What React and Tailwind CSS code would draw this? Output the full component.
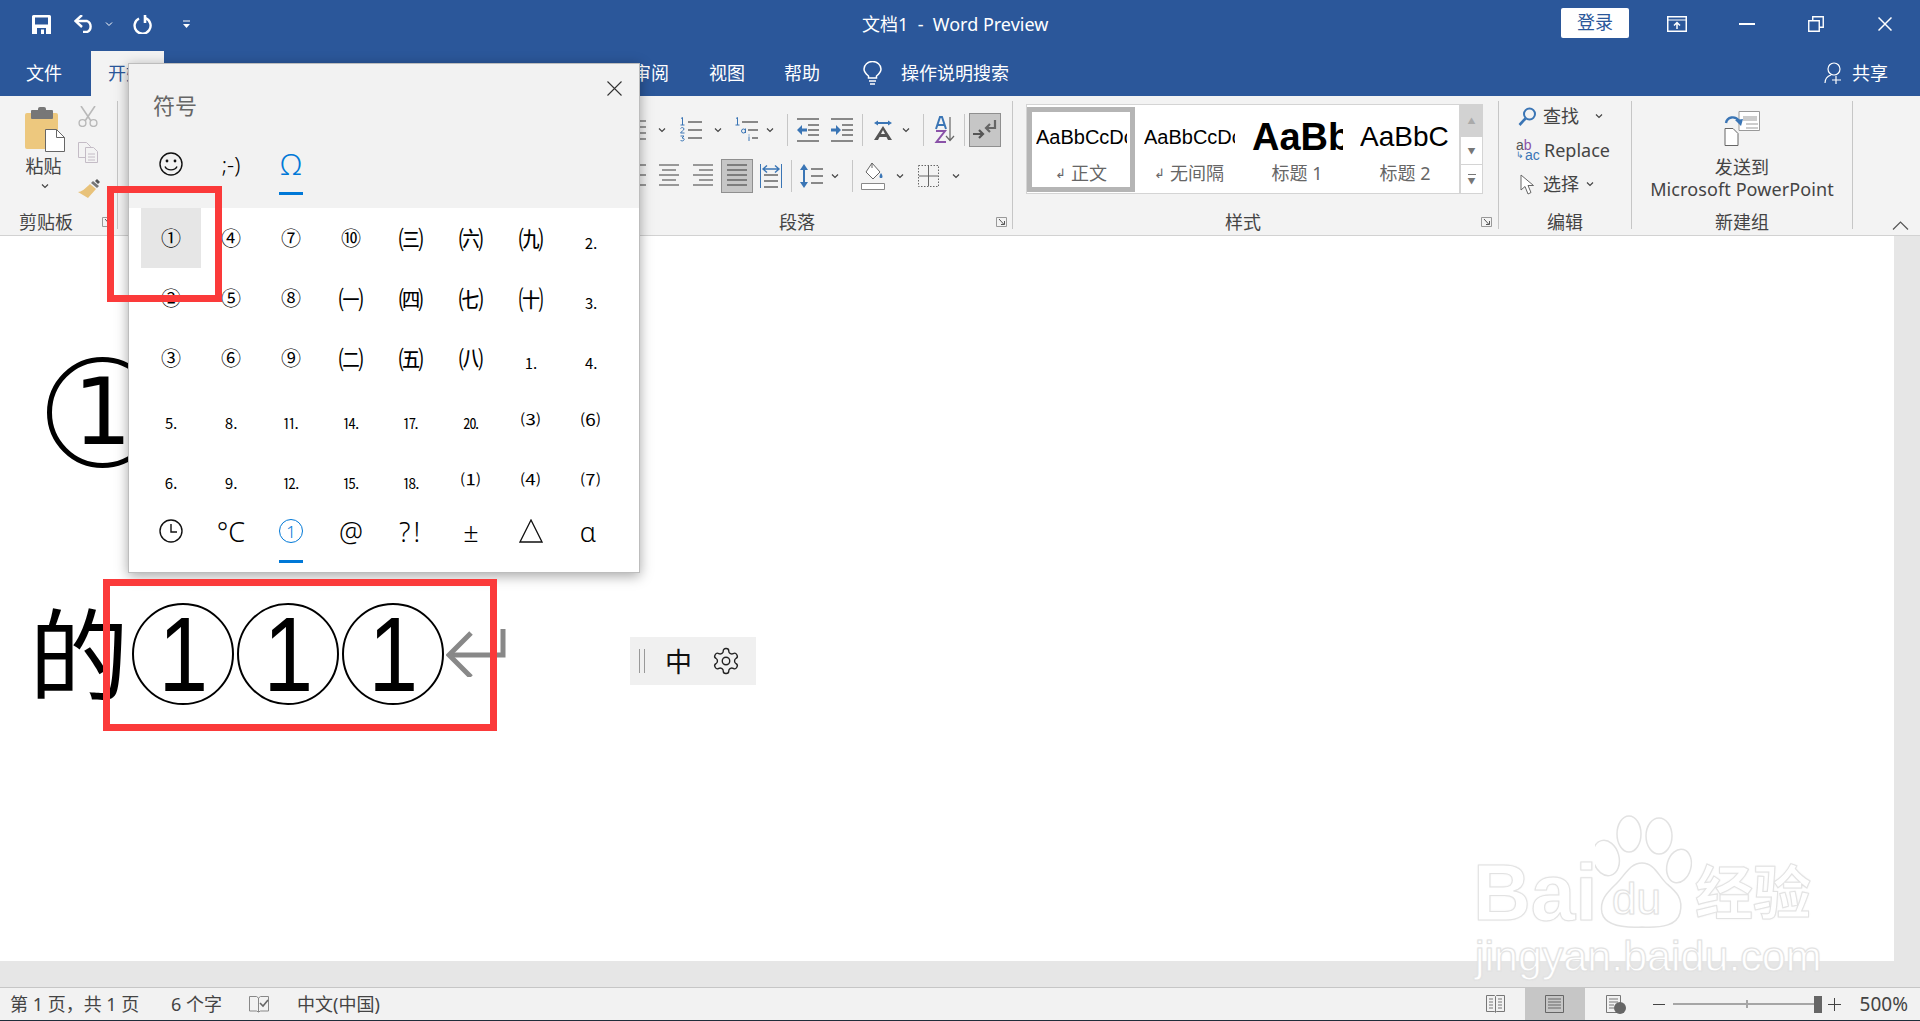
import React from "react";

const blue = "#2b579a";

function Chev({ className = "" }) {
  return (
    <svg width="8" height="6" viewBox="0 0 8 6" className={`shrink-0 ${className}`}>
      <path d="M1 1.5l3 3 3-3" fill="none" stroke="#444" strokeWidth="1.2" />
    </svg>
  );
}

function Sep({ className = "" }) {
  return <div className={`w-px h-[32px] bg-[#c6c6c6] shrink-0 ${className}`} />;
}

function GroupSep() {
  return <div className="w-px h-[128px] mt-[5px] bg-[#c6c6c6] shrink-0" />;
}

function Launcher({ className = "" }) {
  return (
    <svg width="11" height="10" viewBox="0 0 11 10" className={`shrink-0 ${className}`}>
      <path d="M.5 9.5V.5h10v9z" fill="none" stroke="#999" />
      <path d="M3 2l5 5.5M8.5 4v3.5H5" fill="none" stroke="#555" />
    </svg>
  );
}

function Lines({ w = 22, rows = [], color = "#666" }) {
  return (
    <svg width={w} height="26" viewBox={`0 0 ${w} 26`} className="shrink-0">
      {rows.map(([x1, x2, y], i) => (
        <path key={i} d={`M${x1} ${y}H${x2}`} stroke={color} strokeWidth="1.3" />
      ))}
    </svg>
  );
}

const even = [0, 6, 12, 18, 24];

function ListIcon() {
  return <Lines rows={even.slice(0, 4).map((y) => [8, 22, y + 4])} />;
}

function NumberedIcon() {
  return (
    <svg width="22" height="26" viewBox="0 0 22 26" className="shrink-0 overflow-visible">
      <path d="M1 1.500l1.500-1V8M0.500 8h4" fill="none" stroke="#3a75b5" />
      <path d="M.5 11.500c1-1.500 3.500-1 3.500.5s-3.500 3-3.500 4h4" fill="none" stroke="#3a75b5" />
      <path d="M.5 19h3.500l-2 2c2 0 2.500 1 2 2s-3 1.500-3.500 0" fill="none" stroke="#3a75b5" />
      <path d="M8 5h14M8 13h14M8 21h14" stroke="#666" strokeWidth="1.3" />
    </svg>
  );
}

function MultiIcon() {
  return (
    <svg width="23" height="26" viewBox="0 0 23 26" className="shrink-0 overflow-visible">
      <path d="M1 1.500l1.500-1V8M0.500 8h4" fill="none" stroke="#3a75b5" />
      <circle cx="8.500" cy="14" r="2" fill="none" stroke="#3a75b5" />
      <path d="M10.500 11.500V16" stroke="#3a75b5" />
      <path d="M14 19.500V24M14 17.500v1" stroke="#3a75b5" />
      <path d="M7 5h16M13 13h10M17 21h6" stroke="#666" strokeWidth="1.3" />
    </svg>
  );
}

function IndentIcon({ flip }) {
  return (
    <svg width="22" height="24" viewBox="0 0 22 24" className="shrink-0">
      <path d="M0 1h22M11 7h11M11 12h11M11 17h11M0 23h22" stroke="#666" strokeWidth="1.3" />
      {flip ? (
        <path d="M0 10.5h5V7l5 5-5 5v-3.5H0z" fill="#3a75b5" />
      ) : (
        <path d="M10 10.5H5V7l-5 5 5 5v-3.5h5z" fill="#3a75b5" />
      )}
    </svg>
  );
}

function AsianIcon() {
  return (
    <svg width="24" height="20" viewBox="0 0 24 20" className="shrink-0">
      <path d="M3 3l4-2.5V2h10V.5L21 3l-4 2.5V4H7v1.5z" fill="#3a75b5" />
      <path d="M3 20L12 6l9 14h-4l-1.5-3h-7L7 20zM10 14h4l-2-4z" fill="#555" />
    </svg>
  );
}

function SortIcon() {
  return (
    <svg width="20" height="28" viewBox="0 0 20 28" className="shrink-0 overflow-visible">
      <path d="M1 13L5 1h2l4 12M2.500 9h7" fill="none" stroke="#3a75b5" strokeWidth="2" />
      <path d="M1 15h9L1.500 26H11" fill="none" stroke="#8a52a8" strokeWidth="2" />
      <path d="M15 1v23M11 20l4 4.5 4-4.5" fill="none" stroke="#666" strokeWidth="1.2" />
    </svg>
  );
}

function PilcrowIcon() {
  return (
    <svg width="24" height="24" viewBox="0 0 24 24">
      <path d="M22 2v8H13M17 6l-4 4 4 4" fill="none" stroke="#666" strokeWidth="2.2" />
      <path d="M0 16h10M6 12l4 4-4 4" fill="none" stroke="#555" strokeWidth="2.2" />
    </svg>
  );
}

function DistributeIcon() {
  return (
    <svg width="22" height="24" viewBox="0 0 22 24" className="shrink-0">
      <path d="M4 11h14M4 17h14M4 23h14" stroke="#666" strokeWidth="1.3" />
      <path d="M.5 0v24M21.5 0v24" stroke="#3a75b5" />
      <path d="M3 5h16M7 1.5L3 5l4 3.5M15 1.5L19 5l-4 3.5" fill="none" stroke="#3a75b5" strokeWidth="1.4" />
    </svg>
  );
}

function SpacingIcon() {
  return (
    <svg width="23" height="26" viewBox="0 0 23 26" className="shrink-0">
      <path d="M4 3v20" stroke="#3a75b5" strokeWidth="2" />
      <path d="M0 7l4-6 4 6zM0 19l4 6 4-6z" fill="#3a75b5" />
      <path d="M11 6h12M11 13h12M11 20h12" stroke="#666" strokeWidth="1.3" />
    </svg>
  );
}

function ShadingIcon() {
  return (
    <svg width="24" height="28" viewBox="0 0 24 28" className="shrink-0">
      <path d="M11 1l8 9-7 7-7-7z" fill="#fff" stroke="#666" />
      <path d="M20 11c2 3 2 5 0 5s-2-2 0-5z" fill="#3a75b5" />
      <path d="M11 1v5" stroke="#666" />
      <path d="M.5 21.5h23v6H.5z" fill="#fff" stroke="#888" />
    </svg>
  );
}

function BordersIcon() {
  return (
    <svg width="21" height="22" viewBox="0 0 21 22" className="shrink-0">
      <path d="M.5.5h20v21H.5z" fill="none" stroke="#666" strokeDasharray="1.5 1.5" />
      <path d="M10.5 1v20M1 11h19" stroke="#666" />
    </svg>
  );
}

function ClipboardIcon() {
  return (
    <svg width="40" height="45" viewBox="0 0 40 45" className="shrink-0">
      <rect x="0" y="6" width="33" height="36" rx="2" fill="#edc87e" />
      <rect x="6" y="3" width="22" height="9" rx="1" fill="#777" />
      <rect x="13" y="0" width="8" height="6" rx="2" fill="#777" />
      <path d="M20.5 22.5h11l8 8v14h-19z" fill="#fff" stroke="#666" />
      <path d="M31.5 22.5v8h8" fill="none" stroke="#666" />
    </svg>
  );
}

function CutIcon() {
  return (
    <svg width="20" height="21" viewBox="0 0 20 21" className="shrink-0">
      <path d="M3 0l10 15M17 0L7 15" stroke="#b9b9b9" strokeWidth="1.6" />
      <circle cx="4.5" cy="17" r="3.4" fill="none" stroke="#b9b9b9" strokeWidth="1.4" />
      <circle cx="15.5" cy="17" r="3.4" fill="none" stroke="#b9b9b9" strokeWidth="1.4" />
    </svg>
  );
}

function CopyIcon() {
  return (
    <svg width="20" height="21" viewBox="0 0 20 21" className="shrink-0">
      <path d="M.5.5h8l4 4v11H.5z" fill="#f3f3f3" stroke="#c4bcc6" />
      <path d="M7.5 5.5h8l4 4v11h-12z" fill="#f3f3f3" stroke="#c4bcc6" />
      <path d="M10 12h7M10 15h7M10 18h7" stroke="#c4bcc6" />
    </svg>
  );
}

function PainterIcon() {
  return (
    <svg width="23" height="20" viewBox="0 0 23 20" className="shrink-0">
      <path d="M15 3l6 5-2 2-6-5z" fill="#777" />
      <path d="M19 1l3 3-2 2-3-3z" fill="#555" />
      <path d="M12 6l6 5-8 9-10-6c3 0 7-3 12-8z" fill="#e8c27a" />
    </svg>
  );
}

function Replace() {
  return (
    <div className="w-[22px] h-[20px] relative shrink-0 text-[14px] leading-[10px] font-['Liberation_Sans',sans-serif]">
      <span className="text-[#555]">a</span>
      <span className="text-[#8a52a8]">b</span>
      <div className="flex items-center">
        <span className="text-[#3a75b5] text-[9px] mr-[1px]">↳</span>
        <span className="text-[#3a75b5]">ac</span>
      </div>
    </div>
  );
}

function StyleItem({ active, sample, label, arrow, sampleClass }) {
  return (
    <div className={`w-[108px] h-[85px] border-[5px] flex flex-col shrink-0 ${active ? "border-[#b5b5b5]" : "border-transparent"}`}>
      <div className="h-[50px] pl-[4px] flex items-center">
        <div className={`w-[91px] overflow-hidden whitespace-nowrap text-black font-['Liberation_Sans',sans-serif] ${sampleClass}`}>
          {sample}
        </div>
      </div>
      <div className="h-[22px] flex items-center justify-center text-[#666] text-[18px] whitespace-nowrap">
        {arrow && <span className="text-[13px] mr-[5px]">↲</span>}
        {label}
      </div>
    </div>
  );
}

function Ribbon() {
  return (
    <div className="flex h-[140px] shrink-0 bg-[#f3f3f3] border-b border-[#d2d2d2] text-[#444] text-[18px] leading-none">
      <div className="w-[117px] flex flex-col shrink-0">
        <div className="flex-1 flex pl-[24px]">
          <div className="w-[42px] flex flex-col items-center pt-[11px]">
            <ClipboardIcon />
            <div className="mt-[5px] -ml-[3px] whitespace-nowrap">粘贴</div>
            <Chev className="mt-[8px]" />
          </div>
          <div className="ml-[12px] flex flex-col pt-[10px] gap-[15px]">
            <CutIcon />
            <CopyIcon />
            <PainterIcon />
          </div>
        </div>
        <div className="h-[26px] flex items-center pl-[19px]">
          剪贴板
          <Launcher className="ml-[29px]" />
        </div>
      </div>
      <GroupSep />

      <div className="w-[894px] flex flex-col shrink-0">
        <div className="flex-1 pt-[17px] pl-[506px]">
          <div className="flex items-center h-[34px]">
            <ListIcon />
            <Chev className="ml-[12px]" />
            <div className="ml-[14px]"><NumberedIcon /></div>
            <Chev className="ml-[12px]" />
            <div className="ml-[13px]"><MultiIcon /></div>
            <Chev className="ml-[8px]" />
            <Sep className="ml-[13px]" />
            <div className="ml-[9px]"><IndentIcon /></div>
            <div className="ml-[12px]"><IndentIcon flip /></div>
            <Sep className="ml-[9px]" />
            <div className="ml-[8px]"><AsianIcon /></div>
            <Chev className="ml-[7px]" />
            <Sep className="ml-[13px]" />
            <div className="ml-[11px]"><SortIcon /></div>
            <Sep className="ml-[9px]" />
            <div className="ml-[4px] w-[32px] h-[34px] bg-[#c6c6c6] border border-[#8f8f8f] flex items-center justify-center">
              <PilcrowIcon />
            </div>
          </div>
          <div className="flex items-center h-[34px] mt-[12px]">
            <Lines rows={[[8, 22, 2], [8, 16, 7], [8, 22, 12], [8, 16, 17], [8, 22, 22]]} />
            <div className="ml-[13px]"><Lines w={20} rows={[[0, 20, 2], [3, 17, 7], [0, 20, 12], [3, 17, 17], [0, 20, 22]]} /></div>
            <div className="ml-[14px]"><Lines w={20} rows={[[0, 20, 2], [6, 20, 7], [0, 20, 12], [6, 20, 17], [0, 20, 22]]} /></div>
            <div className="ml-[8px] w-[32px] h-[34px] bg-[#c6c6c6] border border-[#8f8f8f] flex items-center justify-center">
              <Lines w={20} color="#555" rows={[[0, 20, 2], [0, 20, 7], [0, 20, 12], [0, 20, 17], [0, 20, 22]]} />
            </div>
            <div className="ml-[7px]"><DistributeIcon /></div>
            <Sep className="ml-[9px]" />
            <div className="ml-[8px]"><SpacingIcon /></div>
            <Chev className="ml-[8px]" />
            <Sep className="ml-[13px]" />
            <div className="ml-[8px]"><ShadingIcon /></div>
            <Chev className="ml-[11px]" />
            <div className="ml-[14px]"><BordersIcon /></div>
            <Chev className="ml-[13px]" />
          </div>
        </div>
        <div className="h-[26px] flex items-center pl-[661px]">
          段落
          <Launcher className="ml-[181px]" />
        </div>
      </div>
      <GroupSep />

      <div className="w-[485px] flex flex-col shrink-0">
        <div className="flex-1 pl-[13px] pt-[8px]">
          <div className="flex">
            <div className="w-[434px] h-[90px] bg-white border border-[#d4d4d4] flex pt-[2px] overflow-hidden">
              <StyleItem active sample="AaBbCcDc" label="正文" arrow sampleClass="text-[20px]" />
              <StyleItem sample="AaBbCcDc" label="无间隔" arrow sampleClass="text-[20px]" />
              <StyleItem sample="AaBb" label="标题 1" sampleClass="text-[38px] font-bold" />
              <StyleItem sample="AaBbC" label="标题 2" sampleClass="text-[28px]" />
            </div>
            <div className="w-[23px] h-[90px] flex flex-col">
              <div className="h-[33px] bg-[#d2d2d2] border border-[#d2d2d2] flex items-center justify-center text-[#aaa] text-[8px]">▲</div>
              <div className="h-[28px] bg-white border border-t-0 border-[#d4d4d4] flex items-center justify-center text-[#777] text-[8px]">▼</div>
              <div className="h-[29px] bg-white border border-t-0 border-[#d4d4d4] flex flex-col items-center justify-center text-[#777]">
                <div className="w-[8px] h-px bg-[#777] mb-[2px]" />
                <div className="text-[8px]">▼</div>
              </div>
            </div>
          </div>
        </div>
        <div className="h-[26px] flex items-center pl-[212px]">
          样式
          <Launcher className="ml-[220px]" />
        </div>
      </div>
      <GroupSep />

      <div className="w-[132px] flex flex-col shrink-0">
        <div className="flex-1 pt-[3px] pl-[17px]">
          <div className="flex items-center h-[34px]">
            <div className="w-[22px] flex justify-center">
              <svg width="19" height="19" viewBox="0 0 19 19">
                <circle cx="11.5" cy="7" r="5.5" fill="none" stroke="#3a75b5" strokeWidth="2" />
                <path d="M7.5 11.5L1.5 18" stroke="#3a75b5" strokeWidth="2.6" />
              </svg>
            </div>
            <span className="ml-[5px]">查找</span>
            <Chev className="ml-[16px]" />
          </div>
          <div className="flex items-center h-[34px]">
            <Replace />
            <span className="ml-[6px]">Replace</span>
          </div>
          <div className="flex items-center h-[34px]">
            <div className="w-[22px] flex justify-center">
              <svg width="15" height="21" viewBox="0 0 15 21">
                <path d="M1 1v15l4-3.5 3 7.5 3-1.5-3-7h5.5z" fill="#fff" stroke="#666" />
              </svg>
            </div>
            <span className="ml-[5px]">选择</span>
            <Chev className="ml-[7px]" />
          </div>
        </div>
        <div className="h-[26px] flex items-center pl-[48px]">编辑</div>
      </div>
      <GroupSep />

      <div className="w-[220px] flex flex-col shrink-0">
        <div className="flex-1 flex flex-col items-center pt-[14px]">
          <svg width="36" height="36" viewBox="0 0 36 36">
            <path d="M15 1.5h20.5v19H15z" fill="#fff" stroke="#999" />
            <path d="M19 6h14v5H19z" fill="#ccc" />
            <path d="M22 14h12M22 18h12" stroke="#999" />
            <path d="M1 18.5h8l5 5v12H1z" fill="#fff" stroke="#666" />
            <path d="M2 13c1-6 9-8 13-2" fill="none" stroke="#3a75b5" strokeWidth="2.4" />
            <path d="M11 10l6 6 2-7z" fill="#3a75b5" />
          </svg>
          <div className="mt-[10px] leading-[22px] text-center whitespace-nowrap tracking-[0.1px]">
            发送到
            <br />
            Microsoft PowerPoint
          </div>
        </div>
        <div className="h-[26px] flex items-center justify-center">新建组</div>
      </div>
      <GroupSep />

      <svg width="17" height="9" viewBox="0 0 17 9" className="self-end mb-[5px] ml-[39px] shrink-0">
        <path d="M1 8.5l7.5-7.5 7.5 7.5" fill="none" stroke="#555" strokeWidth="1.2" />
      </svg>
    </div>
  );
}

function TitleBar() {
  return (
    <div className="h-[51px] shrink-0 flex items-center pr-[28px] text-white">
      <svg width="19" height="19" viewBox="0 0 19 19" className="ml-[32px] shrink-0 -mt-[3px]">
        <path d="M0 1.5A1.5 1.5 0 011.5 0h16A1.5 1.5 0 0119 1.5V19H0z" fill="#fff" />
        <path d="M3 2.5h13v7H3z" fill={blue} />
        <path d="M5 13h9v6H5z" fill={blue} />
        <path d="M9 14.5h3V19H9z" fill="#fff" />
      </svg>
      <svg width="21" height="18" viewBox="0 0 21 18" className="ml-[23px] shrink-0 -mt-[3px]">
        <path d="M2 6h11a6 6 0 010 11H9" fill="none" stroke="#fff" strokeWidth="2.4" />
        <path d="M8 0L1.5 6 8 12" fill="none" stroke="#fff" strokeWidth="2.4" />
      </svg>
      <svg width="8" height="6" viewBox="0 0 8 6" className="ml-[10px] shrink-0 -mt-[3px]">
        <path d="M1 1.5l3 3 3-3" fill="none" stroke="#fff" />
      </svg>
      <svg width="19" height="19" viewBox="0 0 19 19" className="ml-[20px] shrink-0 -mt-[3px]">
        <path d="M6 3.5a8 8 0 106.5-.3" fill="none" stroke="#fff" strokeWidth="2.4" />
        <path d="M12 0v8" stroke="#fff" strokeWidth="2.6" />
      </svg>
      <svg width="9" height="9" viewBox="0 0 9 9" className="ml-[30px] shrink-0 -mt-[3px]">
        <path d="M1 1h7" stroke="#fff" />
        <path d="M1 4h7L4.5 8z" fill="#fff" />
      </svg>
      <div className="ml-[671px] -mt-[3px] text-[18px] whitespace-nowrap">文档1&nbsp; - &nbsp;Word Preview</div>
      <div className="ml-auto -mt-[6px] w-[68px] h-[30px] bg-white rounded-[2px] flex items-center justify-center text-[18px] text-[#2b579a]">登录</div>
      <svg width="20" height="16" viewBox="0 0 20 16" className="ml-[38px] shrink-0 -mt-[3px]">
        <path d="M.75.75h18.500v14.500H.75z" fill="none" stroke="#fff" strokeWidth="1.5" />
        <path d="M1 4h18" stroke="#fff" />
        <path d="M10 13V7M7 9.5l3-3 3 3" fill="none" stroke="#fff" strokeWidth="1.5" />
      </svg>
      <div className="ml-[52px] w-[16px] h-[2px] bg-white shrink-0 -mt-[3px]" />
      <svg width="16" height="16" viewBox="0 0 16 16" className="ml-[53px] shrink-0 -mt-[3px]">
        <path d="M.75 4.75h10.500v10.500H.75zM4.75 4.5V.75h10.500v10.500H11.5" fill="none" stroke="#fff" strokeWidth="1.4" />
      </svg>
      <svg width="14" height="14" viewBox="0 0 14 14" className="ml-[54px] shrink-0 -mt-[3px]">
        <path d="M.5.5l13 13M13.5.5l-13 13" stroke="#fff" strokeWidth="1.5" />
      </svg>
    </div>
  );
}

function TabRow() {
  return (
    <div className="h-[45px] shrink-0 flex items-center pr-[32px] text-white text-[18px] leading-none">
      <div className="ml-[26px] w-[36px] -mt-[2px]">文件</div>
      <div className="ml-[29px] w-[73px] self-stretch bg-[#f3f3f3] text-[#2b579a] pl-[17px] pb-[2px] flex items-center">开始</div>
      <div className="ml-[469px] -mt-[2px]">审阅</div>
      <div className="ml-[40px] -mt-[2px]">视图</div>
      <div className="ml-[39px] -mt-[2px]">帮助</div>
      <svg width="19" height="24" viewBox="0 0 19 24" className="ml-[43px] shrink-0 -mt-[2px]">
        <path d="M5.5 15C3 13 1 11 1 8a8.500 7.500 0 0117 0c0 3-2 5-4.500 7v2h-8z" fill="none" stroke="#fff" strokeWidth="1.5" />
        <path d="M6 20h7M7 23h5" stroke="#fff" strokeWidth="1.5" />
      </svg>
      <div className="ml-[19px] -mt-[2px]">操作说明搜索</div>
      <svg width="20" height="22" viewBox="0 0 20 22" className="ml-auto shrink-0 -mt-[2px]">
        <circle cx="10" cy="7" r="6" fill="none" stroke="#fff" strokeWidth="1.2" />
        <path d="M1 21c0-5 3-7 6-8M12 14v8M8 18h9" fill="none" stroke="#fff" strokeWidth="1.2" />
      </svg>
      <div className="ml-[8px] -mt-[2px]">共享</div>
    </div>
  );
}

const grid = [
  "①", "②", "③", "⒌", "⒍",
  "④", "⑤", "⑥", "⒏", "⒐",
  "⑦", "⑧", "⑨", "⒒", "⒓",
  "⑩", "㈠", "㈡", "⒕", "⒖",
  "㈢", "㈣", "㈤", "⒘", "⒙",
  "㈥", "㈦", "㈧", "⒛", "⑴",
  "㈨", "㈩", "⒈", "⑶", "⑷",
  "⒉", "⒊", "⒋", "⑹", "⑺",
];

// the symbol kinds are drawn at different sizes in the picker
function glyphClass(c) {
  if (c >= "\u2488" && c <= "\u249b") return "text-[15px] pt-[8px]";
  if (c >= "\u2474" && c <= "\u2487") return "text-[15px] scale-x-[1.3]";
  if (c >= "\u3220" && c <= "\u3229") return "text-[25px]";
  return "text-[20px]";
}

function SymbolPopup() {
  return (
    <div className="absolute left-[128px] top-[63px] w-[512px] h-[510px] bg-white border border-[#bdbdbd] shadow-[0_3px_12px_rgba(0,0,0,0.35)] flex flex-col">
      <div className="h-[144px] bg-[#f2f2f2] relative shrink-0">
        <div className="pt-[30px] pl-[24px] text-[22px] leading-none text-[#666]">符号</div>
        <svg width="15" height="15" viewBox="0 0 15 15" className="absolute right-[17px] top-[17px]">
          <path d="M.5.500l14 14M14.500.500l-14 14" stroke="#333" strokeWidth="1.1" />
        </svg>
        <div className="flex pl-[12px] mt-[28px] text-black">
          <div className="w-[60px] h-[40px] flex items-center justify-center">
            <svg width="24" height="24" viewBox="0 0 24 24">
              <circle cx="12" cy="12" r="11" fill="none" stroke="#111" strokeWidth="1.4" />
              <circle cx="8" cy="9" r="1.400" fill="#111" />
              <circle cx="16" cy="9" r="1.400" fill="#111" />
              <path d="M6 14.500c2 4.500 10 4.500 12 0" fill="none" stroke="#111" strokeWidth="1.4" />
            </svg>
          </div>
          <div className="w-[60px] h-[40px] flex items-center justify-center text-[22px] font-light">;-)</div>
          <div className="w-[60px] h-[40px] flex flex-col items-center justify-center text-[#0078d7] text-[30px] leading-none font-light">Ω</div>
        </div>
        <div className="absolute left-[150px] top-[128px] w-[24px] h-[3px] bg-[#0078d7]" />
      </div>
      <div className="pl-[12px] grid grid-flow-col grid-rows-[repeat(5,60px)] grid-cols-[repeat(8,60px)] text-black leading-none font-['Noto_Sans_CJK_SC',sans-serif] shrink-0 h-[300px]">
        {grid.map((c, i) => (
          <div key={i} className={`flex items-center justify-center ${i === 0 ? "bg-[#e6e6e6]" : ""}`}>
            <span className={glyphClass(c)}>{c}</span>
          </div>
        ))}
      </div>
      <div className="pl-[12px] flex text-black leading-none relative font-light">
        <div className="w-[60px] h-[46px] flex items-center justify-center">
          <svg width="24" height="24" viewBox="0 0 24 24">
            <circle cx="12" cy="12" r="11" fill="none" stroke="#111" strokeWidth="1.4" />
            <path d="M12 5v8h6" fill="none" stroke="#111" strokeWidth="1.4" />
          </svg>
        </div>
        <div className="w-[60px] h-[46px] flex items-center justify-center text-[27px]">°C</div>
        <div className="w-[60px] h-[46px] flex items-center justify-center">
          <div className="w-[24px] h-[24px] rounded-full border border-[#0078d7] text-[#0078d7] text-[17px] flex items-center justify-center">1</div>
        </div>
        <div className="w-[60px] h-[46px] flex items-center justify-center text-[27px]">@</div>
        <div className="w-[60px] h-[46px] flex items-center justify-center text-[27px] tracking-[3px]">?!</div>
        <div className="w-[60px] h-[46px] flex items-center justify-center text-[27px]">±</div>
        <div className="w-[60px] h-[46px] flex items-center justify-center">
          <svg width="24" height="24" viewBox="0 0 24 24">
            <path d="M12 1L1 23h22z" fill="none" stroke="#111" strokeWidth="1.3" />
          </svg>
        </div>
        <div className="w-[54px] h-[46px] flex items-center justify-center text-[27px]">α</div>
        <div className="absolute left-[150px] top-[52px] w-[24px] h-[3px] bg-[#0078d7]" />
      </div>
    </div>
  );
}

function Circled() {
  return (
    <div className="w-[102px] h-[102px] shrink-0 rounded-full border-2 border-black flex items-center justify-center text-[105px] leading-none text-black font-['Liberation_Sans',sans-serif]">
      <span className="scale-x-[0.85]">1</span>
    </div>
  );
}

function Document() {
  return (
    <div className="flex-1 flex min-h-0">
      <div className="flex-1 bg-white pt-[121px] overflow-hidden">
        <div className="ml-[47px] w-[111px] h-[111px] rounded-full border-[5px] border-black flex items-center justify-center text-[92px] leading-none text-black font-['DejaVu_Sans',sans-serif]">
          1
        </div>
        <div className="mt-[135px] ml-[30px] flex items-center">
          <div className="w-[102px] shrink-0 text-[100px] leading-none text-black -ml-[1px] mr-[1px]">的</div>
          <div className="flex gap-[3px]">
            <Circled />
            <Circled />
            <Circled />
          </div>
          <svg width="60" height="54" viewBox="0 0 60 54" className="ml-[2px] shrink-0 -mt-[8px]">
            <path d="M57 6v26H4" fill="none" stroke="#888" strokeWidth="5" />
            <path d="M25 10L3 32l22 22" fill="none" stroke="#888" strokeWidth="5" />
          </svg>
        </div>
      </div>
      <div className="w-[26px] bg-[#e6e6e6] shrink-0" />
    </div>
  );
}

function StatusBar() {
  return (
    <div className="h-[33px] shrink-0 bg-[#f2f2f2] border-t border-[#c6c6c6] flex items-center text-[#444] text-[18px] leading-none whitespace-nowrap pr-[12px]">
      <div className="ml-[10px] w-[132px]">第 1 页，共 1 页</div>
      <div className="ml-[29px] w-[51px]">6 个字</div>
      <svg width="20" height="18" viewBox="0 0 20 18" className="ml-[27px] shrink-0">
        <path d="M.5 1.500h7l2 1.500v14l-2-1H.500zM9.500 3l2-1.500h8v14.500h-8l-2 1" fill="none" stroke="#888" />
        <path d="M11 8l3 3 5-6" fill="none" stroke="#666" strokeWidth="1.6" />
      </svg>
      <div className="ml-[28px]">中文(中国)</div>
      <svg width="19" height="18" viewBox="0 0 19 18" className="ml-auto shrink-0">
        <path d="M.5.500h8l1 1 1-1h8v16h-8l-1 1-1-1h-8zM9.500 2v15M3 4h4M3 7h4M3 10h4M3 13h4M12 4h4M12 7h4M12 10h4M12 13h4" fill="none" stroke="#777" />
      </svg>
      <div className="ml-[20px] w-[60px] h-[32px] bg-[#c6c6c6] flex items-center justify-center shrink-0">
        <svg width="19" height="18" viewBox="0 0 19 18">
          <path d="M.5.500h18v17H.500zM3 4h13M3 7h13M3 10h13M3 13h13" fill="none" stroke="#666" />
        </svg>
      </div>
      <svg width="20" height="19" viewBox="0 0 20 19" className="ml-[21px] shrink-0">
        <path d="M.5.500h14v17H.5zM3 4h9M3 7h9M3 10h5M3 13h5" fill="none" stroke="#777" />
        <circle cx="14" cy="13" r="6" fill="#666" />
      </svg>
      <div className="ml-[27px] w-[12px] h-px bg-[#444] shrink-0" />
      <div className="ml-[8px] w-[141px] h-[2px] bg-[#a6a6a6] shrink-0 relative">
        <div className="absolute left-[73px] -top-[3px] w-[2px] h-[8px] bg-[#a6a6a6]" />
      </div>
      <div className="w-[8px] h-[17px] bg-[#666] shrink-0" />
      <div className="ml-[6px] relative w-[13px] h-[13px] shrink-0">
        <div className="absolute top-[6px] left-0 w-[13px] h-px bg-[#444]" />
        <div className="absolute left-[6px] top-0 h-[13px] w-px bg-[#444]" />
      </div>
      <div className="ml-[19px] text-[19px]">500%</div>
    </div>
  );
}

function Watermark() {
  return (
    <div className="absolute left-[1470px] top-[825px] w-[350px] h-[155px] text-white [-webkit-text-stroke:1px_#e2e2e2] [text-shadow:0_0_2px_#dddddd] pointer-events-none">
      <svg width="100" height="117" viewBox="0 -12 100 117" className="absolute left-[125px] -top-[12px]">
        <g fill="#fff" stroke="#e2e2e2" strokeWidth="1.5">
          <ellipse cx="11" cy="33" rx="13" ry="18" transform="rotate(-15 11 33)" />
          <ellipse cx="34" cy="9" rx="12" ry="18" />
          <ellipse cx="64" cy="11" rx="13" ry="18" />
          <ellipse cx="84" cy="41" rx="12" ry="17" transform="rotate(15 84 41)" />
          <path d="M47 38c12 0 16 12 24 20 8 7 18 14 14 30-3 12-17 15-38 14-21 1-37-2-40-14-3-14 7-22 15-30 8-8 13-20 25-20z" />
        </g>
      </svg>
      <div className="absolute left-[142px] top-[52px] text-[44px] leading-none font-['Liberation_Sans',sans-serif]">du</div>
      <div className="absolute left-[3px] top-[28px] text-[80px] leading-none font-bold font-['Liberation_Sans',sans-serif]">Bai</div>
      <div className="absolute left-[225px] top-[38px] text-[58px] leading-none font-bold whitespace-nowrap">经验</div>
      <div className="absolute left-[5px] top-[110px] text-[43px] leading-none whitespace-nowrap font-['Liberation_Sans',sans-serif]">jingyan.baidu.com</div>
    </div>
  );
}

export default function App() {
  return (
    <div className="relative w-[1920px] h-[1021px] overflow-hidden flex flex-col bg-[#2b579a] font-['Noto_Sans','Noto_Sans_CJK_SC',sans-serif]">
      <TitleBar />
      <TabRow />
      <Ribbon />
      <Document />
      <div className="h-[26px] shrink-0 bg-[#e6e6e6]" />
      <StatusBar />
      <div className="h-px shrink-0 bg-[#1f2d3a]" />

      <Watermark />
      <SymbolPopup />

      {/* red marks from the tutorial image */}
      <div className="absolute left-[107px] top-[186px] w-[115px] h-[116px] border-[7px] border-[#fb3a3a]" />
      <div className="absolute left-[103px] top-[579px] w-[394px] h-[152px] border-[7px] border-[#fb3a3a]" />

      <div className="absolute left-[630px] top-[637px] w-[126px] h-[48px] bg-[#f0f0f0] flex items-center">
        <div className="ml-[9px] w-[6px] h-[24px] border-x border-[#999]" />
        <span className="ml-[20px] text-[27px] leading-none text-[#111]">中</span>
        <svg width="30" height="30" viewBox="0 0 24 24" className="ml-[19px] shrink-0" fill="none" stroke="#222" strokeWidth="1.1">
          <path d="M12.22 2h-.44a2 2 0 0 0-2 2v.18a2 2 0 0 1-1 1.73l-.43.25a2 2 0 0 1-2 0l-.15-.08a2 2 0 0 0-2.73.73l-.22.38a2 2 0 0 0 .73 2.73l.15.1a2 2 0 0 1 1 1.72v.51a2 2 0 0 1-1 1.74l-.15.09a2 2 0 0 0-.73 2.73l.22.38a2 2 0 0 0 2.73.73l.15-.08a2 2 0 0 1 2 0l.43.25a2 2 0 0 1 1 1.73V20a2 2 0 0 0 2 2h.44a2 2 0 0 0 2-2v-.18a2 2 0 0 1 1-1.73l.43-.25a2 2 0 0 1 2 0l.15.08a2 2 0 0 0 2.73-.73l.22-.39a2 2 0 0 0-.73-2.73l-.15-.08a2 2 0 0 1-1-1.74v-.5a2 2 0 0 1 1-1.74l.15-.09a2 2 0 0 0 .73-2.73l-.22-.38a2 2 0 0 0-2.73-.73l-.15.08a2 2 0 0 1-2 0l-.43-.25a2 2 0 0 1-1-1.73V4a2 2 0 0 0-2-2z" />
          <circle cx="12" cy="12" r="3" />
        </svg>
      </div>
    </div>
  );
}
